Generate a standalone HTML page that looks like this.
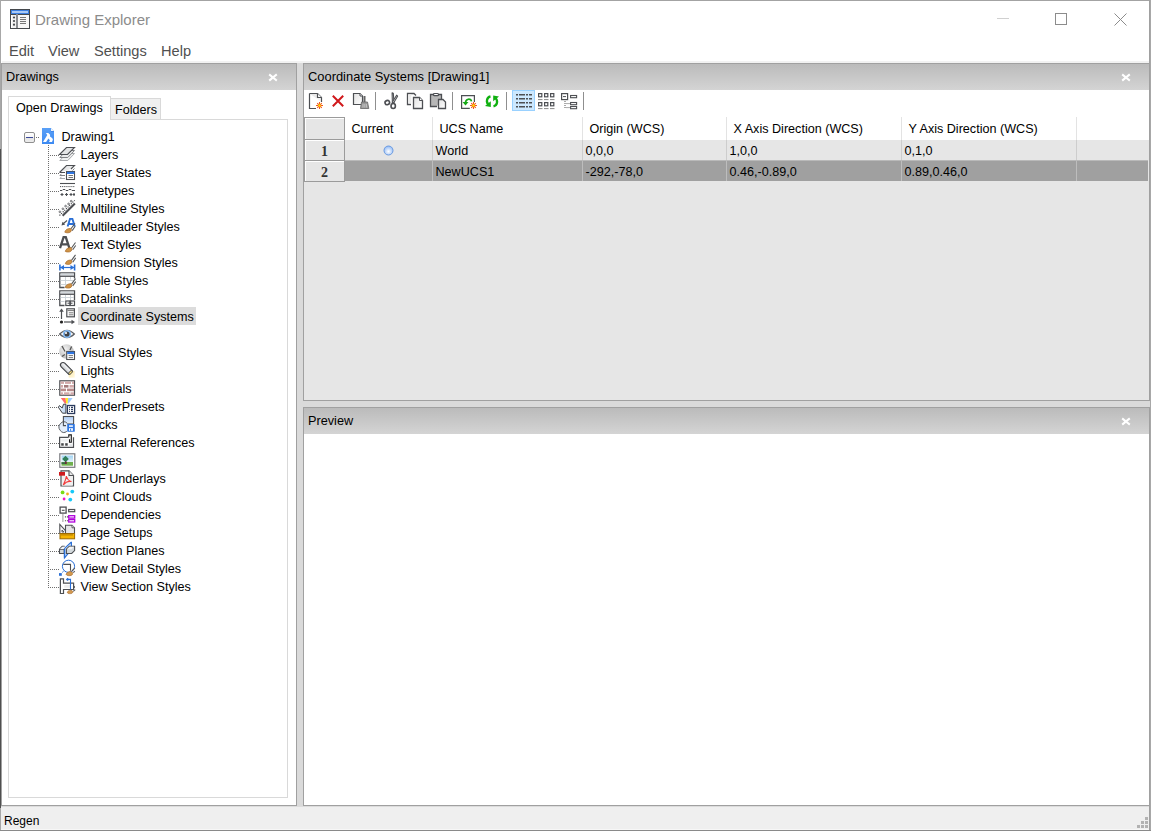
<!DOCTYPE html>
<html><head><meta charset="utf-8">
<style>
*{margin:0;padding:0;box-sizing:border-box}
html,body{width:1151px;height:831px;overflow:hidden;background:#fff;font-family:"Liberation Sans",sans-serif;color:#000}
.a{position:absolute}
.t{position:absolute;white-space:nowrap;line-height:1}
svg{position:absolute;overflow:visible}
.hdr{position:absolute;background:linear-gradient(#bbbbbb,#d4d4d4)}
</style></head><body>
<!-- window frame -->
<div class="a" style="left:0;top:0;width:1151px;height:1px;background:#a3a3a3"></div>
<div class="a" style="left:0;top:0;width:1px;height:831px;background:#a8a8a8"></div><div class="a" style="left:0;top:149px;width:1px;height:659px;background:#4f4f4f"></div>
<div class="a" style="left:1149px;top:0;width:1px;height:831px;background:#a0a0a0"></div>
<div class="a" style="left:1150px;top:0;width:1px;height:831px;background:#a8a8a8"></div>
<div class="a" style="left:0;top:830px;width:1151px;height:1px;background:#8a8a8a"></div>

<svg style="left:10px;top:9px" width="20" height="20" viewBox="0 0 20 20">
<rect x="0.5" y="0.5" width="19" height="19" fill="#fff" stroke="#45484c"/>
<rect x="1" y="1" width="18" height="4" fill="#3a7ee0"/><rect x="2" y="2" width="16" height="2" fill="#a9c9f5"/>
<path d="M1,5.5H19" stroke="#45484c"/><rect x="6" y="5" width="2" height="14" fill="#8a8c90"/>
<rect x="2" y="6" width="4" height="13" fill="#f1f1f1"/><rect x="8" y="6" width="11" height="13" fill="#f7f7f7"/>
<circle cx="4" cy="8.5" r="1.1" fill="#45484c"/><circle cx="4" cy="12" r="1.1" fill="#45484c"/><circle cx="4" cy="15.7" r="1.1" fill="#45484c"/>
<path d="M10,8.5h6M10,10.5h6M10,12.5h6M10,14.5h6" stroke="#777" stroke-width="1"/>
</svg>
<div class="t" style="left:35px;top:11.5px;font-size:15px;color:#8c8c8c">Drawing Explorer</div>
<div class="a" style="left:997px;top:18px;width:12px;height:1px;background:#d0d0d0"></div>
<div class="a" style="left:1055px;top:13px;width:12px;height:12px;border:1px solid #8c8c8c"></div>
<svg style="left:1114px;top:13px" width="13" height="13" viewBox="0 0 13 13"><path d="M0.5,0.5 L12.5,12.5 M12.5,0.5 L0.5,12.5" stroke="#8c8c8c" stroke-width="1"/></svg>

<div class="t" style="left:9px;top:44px;font-size:14.6px;color:#505050">Edit</div>
<div class="t" style="left:48px;top:44px;font-size:14.6px;color:#505050">View</div>
<div class="t" style="left:94px;top:44px;font-size:14.6px;color:#505050">Settings</div>
<div class="t" style="left:161px;top:44px;font-size:14.6px;color:#505050">Help</div>

<div class="a" style="left:2px;top:61px;width:1147px;height:2px;background:#f2f2f2"></div>

<!-- left dock -->
<div class="a" style="left:1px;top:63px;width:296px;height:743px;background:#fff;border:1px solid #a0a0a0"></div>
<div class="hdr" style="left:2px;top:64px;width:294px;height:26px"></div>
<div class="t" style="left:6px;top:71px;font-size:12.7px">Drawings</div>
<svg style="left:269px;top:74px" width="8" height="7" viewBox="0 0 8 7"><path d="M1,1 L7,6 M7,1 L1,6" stroke="#fff" stroke-width="2.1" stroke-linecap="square"/></svg>

<!-- tabs -->
<div class="a" style="left:8px;top:119px;width:280px;height:679px;border:1px solid #d9d9d9"></div>
<div class="a" style="left:110px;top:98px;width:51px;height:22px;background:#f0f0f0;border:1px solid #d9d9d9"></div>
<div class="a" style="left:8px;top:96px;width:103px;height:24px;background:#fff;border:1px solid #d9d9d9;border-bottom:none"></div>
<div class="t" style="left:16px;top:102px;font-size:12.6px">Open Drawings</div>
<div class="t" style="left:115px;top:104px;font-size:12.6px">Folders</div>
<div class="a" style="left:24px;top:132px;width:11px;height:11px;border:1px solid #8f8f8f;border-radius:2px;background:linear-gradient(#fff 0,#f7f7f7 45%,#e4e4e4 55%,#ececec)"></div>
<div class="a" style="left:26px;top:137px;width:7px;height:1px;background:#3b4a9a"></div>
<div class="a" style="left:36px;top:137px;width:4px;height:1px;background:repeating-linear-gradient(to right,#6e6e6e 0 1px,transparent 1px 2px)"></div>
<svg style="left:42px;top:128px" width="12" height="16" viewBox="0 0 12 16">
<defs><linearGradient id="dg" x1="0" y1="0" x2="0" y2="1"><stop offset="0" stop-color="#5aa0f7"/><stop offset="1" stop-color="#3d8af2"/></linearGradient></defs>
<path d="M0,0 H9 L12,3 V16 H0Z" fill="url(#dg)"/><path d="M9,0 L12,3 H9Z" fill="#eef3fa"/><rect x="9" y="3" width="3" height="0.8" fill="#3b82e8"/>
<path d="M3.9,5.1 H6.3 L8.1,6.7 L8,8.5 C9.5,9.3 10.9,10.5 10.9,11.8 L10,13.9 H7 L7.9,12.2 L6.4,10.6 L4.1,13.9 H1 L5.3,7.1Z" fill="#fff"/></svg>
<div class="t" style="left:61.5px;top:130.5px;font-size:12.6px">Drawing1</div>
<div class="a" style="left:48px;top:145px;width:1px;height:443px;background:repeating-linear-gradient(to bottom,#6e6e6e 0 1px,transparent 1px 2px)"></div>
<div class="a" style="left:50px;top:155px;width:9px;height:1px;background:repeating-linear-gradient(to right,#6e6e6e 0 1px,transparent 1px 2px)"></div>
<svg style="left:59px;top:146px" width="17" height="17" viewBox="0 0 17 17"><path d="M0.8,14.5 L7.5,7.5 H15.5 L8.8,14.5Z" fill="#f0f1f1" stroke="#a8aaad"/>
<path d="M0.8,11.5 L7.5,4.5 H15.5 L8.8,11.5Z" fill="#eaebec" stroke="#808285"/>
<path d="M0.5,8.5 L7.5,1.5 H15.5 L8.5,8.5Z" fill="#e4e5e6" stroke="#4d4f53" stroke-width="1.1"/></svg>
<div class="t" style="left:80.5px;top:148.5px;font-size:12.6px">Layers</div>
<div class="a" style="left:50px;top:173px;width:9px;height:1px;background:repeating-linear-gradient(to right,#6e6e6e 0 1px,transparent 1px 2px)"></div>
<svg style="left:59px;top:164px" width="17" height="17" viewBox="0 0 17 17"><path d="M0.8,14.5 L2.5,12.8 M1,14.5 H6" fill="none" stroke="#a8aaad"/>
<path d="M0.8,11.5 L2.5,9.8 M1,11.5 H6" fill="none" stroke="#808285"/>
<path d="M0.5,8.5 L7.5,1.5 H15.5 L12,5 M0.5,8.5 H6" fill="#e8e9ea" stroke="#4d4f53" stroke-width="1.1"/>
<path d="M15.5,4.5 L13.5,6.5" stroke="#808285"/>
<rect x="7.5" y="7.5" width="8" height="8" fill="#fff" stroke="#4d4f53" stroke-width="1.1"/>
<rect x="8" y="7.8" width="7.3" height="2.2" fill="#2f76e0"/>
<path d="M9.5,11.5h4.5M9.5,13.5h4.5" stroke="#777"/></svg>
<div class="t" style="left:80.5px;top:166.5px;font-size:12.6px">Layer States</div>
<div class="a" style="left:50px;top:191px;width:9px;height:1px;background:repeating-linear-gradient(to right,#6e6e6e 0 1px,transparent 1px 2px)"></div>
<svg style="left:59px;top:182px" width="17" height="17" viewBox="0 0 17 17"><path d="M1,1.5H16" stroke="#4d4f53" stroke-width="1.1"/>
<path d="M1,4.6H16" stroke="#4d4f53" stroke-dasharray="1.2,0.9"/>
<path d="M1,8.5 H3 L4,7.5 H6 L7,8.5 H9 L10,7.5 H12 L13,8.5 H16" stroke="#4d4f53" fill="none" stroke-width="1"/>
<path d="M1.5,12.5h3M3,11v3M6,12.5h3M7.5,11v3M10.5,12.5h3M12,11v3M14,12.5h2M15,11v3" stroke="#4d4f53" stroke-width="1.1"/></svg>
<div class="t" style="left:80.5px;top:184.5px;font-size:12.6px">Linetypes</div>
<div class="a" style="left:50px;top:209px;width:9px;height:1px;background:repeating-linear-gradient(to right,#6e6e6e 0 1px,transparent 1px 2px)"></div>
<svg style="left:59px;top:200px" width="17" height="17" viewBox="0 0 17 17"><path d="M0.5,15.5 L15.7,0.3" stroke="#3f4145" stroke-dasharray="1.2,1.1" stroke-width="1.1"/>
<path d="M3.6,15.8 L15.9,3.5" stroke="#4d4f53" stroke-width="2.1"/>
<g fill="#c8c9cb" stroke="#5a5c60" stroke-width="0.7"><circle cx="0.9" cy="11.8" r="0.9"/><circle cx="3.9" cy="8.8" r="0.9"/><circle cx="6.6" cy="6.1" r="0.9"/><circle cx="9.6" cy="3.9" r="0.9"/><circle cx="12.2" cy="1.2" r="0.9"/></g></svg>
<div class="t" style="left:80.5px;top:202.5px;font-size:12.6px">Multiline Styles</div>
<div class="a" style="left:50px;top:227px;width:9px;height:1px;background:repeating-linear-gradient(to right,#6e6e6e 0 1px,transparent 1px 2px)"></div>
<svg style="left:59px;top:218px" width="17" height="17" viewBox="0 0 17 17"><path d="M8.6,8.5 L11,0.9 H13.4 L15.8,8.5 M10,6 H14.5" stroke="#2a6fd6" stroke-width="1.9" fill="none"/>
<path d="M8,2.5 L4.5,5.5" stroke="#4d4f53" stroke-width="1.1"/><path d="M2.5,7.5 L3.5,3.8 L6.2,6.5Z" fill="#4d4f53"/>
<g transform="translate(0,0)"><path d="M16,5.3 L12,10.8 M16.2,8.3 L13.2,12.6" stroke="#55575a" stroke-width="1.1" fill="none"/>
<path d="M5.8,14.2 C6.2,11.8 8.5,10.3 11.6,10.4 C13,11.3 12.6,14 10.2,14.6 C8.6,15 7,14.8 5.8,14.2Z" fill="#cf9447" stroke="#a8682a" stroke-width="0.7"/></g></svg>
<div class="t" style="left:80.5px;top:220.5px;font-size:12.6px">Multileader Styles</div>
<div class="a" style="left:50px;top:245px;width:9px;height:1px;background:repeating-linear-gradient(to right,#6e6e6e 0 1px,transparent 1px 2px)"></div>
<svg style="left:59px;top:236px" width="17" height="17" viewBox="0 0 17 17"><path d="M1,12.2 L4.6,1.1 H6.8 L10.4,12.2 M3,8.3 H8.4" stroke="#4d4f53" stroke-width="2.3" fill="none"/>
<g transform="translate(0.5,1.2)"><path d="M16,5.3 L12,10.8 M16.2,8.3 L13.2,12.6" stroke="#55575a" stroke-width="1.1" fill="none"/>
<path d="M5.8,14.2 C6.2,11.8 8.5,10.3 11.6,10.4 C13,11.3 12.6,14 10.2,14.6 C8.6,15 7,14.8 5.8,14.2Z" fill="#cf9447" stroke="#a8682a" stroke-width="0.7"/></g></svg>
<div class="t" style="left:80.5px;top:238.5px;font-size:12.6px">Text Styles</div>
<div class="a" style="left:50px;top:263px;width:9px;height:1px;background:repeating-linear-gradient(to right,#6e6e6e 0 1px,transparent 1px 2px)"></div>
<svg style="left:59px;top:254px" width="17" height="17" viewBox="0 0 17 17"><g transform="translate(0.5,-4.4)"><path d="M16,5.3 L12,10.8 M16.2,8.3 L13.2,12.6" stroke="#55575a" stroke-width="1.1" fill="none"/>
<path d="M5.8,14.2 C6.2,11.8 8.5,10.3 11.6,10.4 C13,11.3 12.6,14 10.2,14.6 C8.6,15 7,14.8 5.8,14.2Z" fill="#cf9447" stroke="#a8682a" stroke-width="0.7"/></g><path d="M1,13.5H15" stroke="#2a6fd6" stroke-width="1.2"/>
<path d="M0.9,10.5v6M15.6,10.5v6" stroke="#2a6fd6" stroke-width="1.6"/>
<path d="M1.2,13.5 L5,11 V16Z M15.3,13.5 L11.5,11 V16Z" fill="#2a6fd6"/></svg>
<div class="t" style="left:80.5px;top:256.5px;font-size:12.6px">Dimension Styles</div>
<div class="a" style="left:50px;top:281px;width:9px;height:1px;background:repeating-linear-gradient(to right,#6e6e6e 0 1px,transparent 1px 2px)"></div>
<svg style="left:59px;top:272px" width="17" height="17" viewBox="0 0 17 17"><path d="M5.5,15.5 H0.8 V0.8 H15.5 V6.5" fill="#fff" stroke="#4d4f53" stroke-width="1.3"/>
<rect x="1.5" y="1.5" width="13.4" height="2.4" fill="#d3d8dc"/><path d="M1,4.3H15.5" stroke="#4d4f53" stroke-width="1.2"/>
<path d="M6.5,5v10.5M11.5,5v2.5M1.5,8.5h13M1.5,12.5h7" stroke="#c9d0d6" stroke-width="0.9"/><g transform="translate(0.5,1.3)"><path d="M16,5.3 L12,10.8 M16.2,8.3 L13.2,12.6" stroke="#55575a" stroke-width="1.1" fill="none"/>
<path d="M5.8,14.2 C6.2,11.8 8.5,10.3 11.6,10.4 C13,11.3 12.6,14 10.2,14.6 C8.6,15 7,14.8 5.8,14.2Z" fill="#cf9447" stroke="#a8682a" stroke-width="0.7"/></g></svg>
<div class="t" style="left:80.5px;top:274.5px;font-size:12.6px">Table Styles</div>
<div class="a" style="left:50px;top:299px;width:9px;height:1px;background:repeating-linear-gradient(to right,#6e6e6e 0 1px,transparent 1px 2px)"></div>
<svg style="left:59px;top:290px" width="17" height="17" viewBox="0 0 17 17"><path d="M5.5,15.5 H0.8 V0.8 H15.5 V10" fill="#fff" stroke="#4d4f53" stroke-width="1.3"/>
<rect x="1.5" y="1.5" width="13.4" height="2.4" fill="#d3d8dc"/><path d="M1,4.3H15.5" stroke="#4d4f53" stroke-width="1.2"/>
<path d="M6.5,5v5M11.5,5v5M1.5,7.5h13.5M1.5,11.5h4" stroke="#c9d0d6" stroke-width="0.9"/>
<rect x="6.8" y="11" width="4.2" height="4.5" fill="#fff" stroke="#4d4f53" stroke-width="1.2"/><rect x="11.3" y="11" width="4.2" height="4.5" fill="#fff" stroke="#4d4f53" stroke-width="1.2"/>
<path d="M8.5,13.2h5" stroke="#4d4f53" stroke-width="1.1"/></svg>
<div class="t" style="left:80.5px;top:292.5px;font-size:12.6px">Datalinks</div>
<div class="a" style="left:50px;top:317px;width:9px;height:1px;background:repeating-linear-gradient(to right,#6e6e6e 0 1px,transparent 1px 2px)"></div>
<svg style="left:59px;top:308px" width="17" height="17" viewBox="0 0 17 17"><path d="M2.5,11V1.5" stroke="#4d4f53" stroke-width="1.2"/><path d="M0.2,3.8 L2.5,0.4 L4.8,3.8Z" fill="#4d4f53"/>
<circle cx="2.5" cy="14" r="1.6" fill="#222"/>
<path d="M5,14H14" stroke="#4d4f53" stroke-width="1.2"/><path d="M12.5,11.7 L16,14 L12.5,16.3Z" fill="#4d4f53"/>
<rect x="7.8" y="0.8" width="7.6" height="8" fill="#fff" stroke="#4d4f53" stroke-width="1.2"/>
<path d="M8.5,2.6h6.5M9.8,4.8h4.6M9.8,6.8h4.6" stroke="#666" stroke-width="0.9"/></svg>
<div class="a" style="left:78px;top:307px;width:118px;height:18px;background:#dcdcdc"></div>
<div class="t" style="left:80.5px;top:310.5px;font-size:12.6px">Coordinate Systems</div>
<div class="a" style="left:50px;top:335px;width:9px;height:1px;background:repeating-linear-gradient(to right,#6e6e6e 0 1px,transparent 1px 2px)"></div>
<svg style="left:59px;top:326px" width="17" height="17" viewBox="0 0 17 17"><path d="M0.6,8 Q8,0.8 15.4,8 Q8,15.2 0.6,8Z" fill="#f4f4f4" stroke="#5a5c60" stroke-width="1.1"/>
<circle cx="8" cy="8" r="3.3" fill="#404246" stroke="#86bdf7" stroke-width="1.5"/>
<circle cx="7" cy="7" r="1.1" fill="#fff"/></svg>
<div class="t" style="left:80.5px;top:328.5px;font-size:12.6px">Views</div>
<div class="a" style="left:50px;top:353px;width:9px;height:1px;background:repeating-linear-gradient(to right,#6e6e6e 0 1px,transparent 1px 2px)"></div>
<svg style="left:59px;top:344px" width="17" height="17" viewBox="0 0 17 17"><defs><radialGradient id="vs" cx="0.4" cy="0.35" r="0.7"><stop offset="0" stop-color="#f2f2f2"/><stop offset="1" stop-color="#b8b8b8"/></radialGradient></defs>
<circle cx="7.5" cy="7.5" r="7.3" fill="url(#vs)"/>
<path d="M3,2 L6,7.5 M12.6,2.5 L11,6 M3,12.5 L5.8,10.5" stroke="#555" stroke-width="1.3"/>
<rect x="7.7" y="7.5" width="7.8" height="8" fill="#fff" stroke="#4d4f53" stroke-width="1.1"/>
<rect x="8.2" y="7.8" width="7" height="2.3" fill="#2f76e0"/>
<path d="M9.6,11.6h4.4M9.6,13.6h4.4" stroke="#777"/></svg>
<div class="t" style="left:80.5px;top:346.5px;font-size:12.6px">Visual Styles</div>
<div class="a" style="left:50px;top:371px;width:9px;height:1px;background:repeating-linear-gradient(to right,#6e6e6e 0 1px,transparent 1px 2px)"></div>
<svg style="left:59px;top:362px" width="17" height="17" viewBox="0 0 17 17"><defs><linearGradient id="lg" x1="0" y1="0" x2="1" y2="1"><stop offset="0" stop-color="#fde9a8"/><stop offset="1" stop-color="#fff8e0"/></linearGradient>
<linearGradient id="lc" x1="0" y1="1" x2="1" y2="0"><stop offset="0" stop-color="#7d8084"/><stop offset="0.55" stop-color="#eef0f2"/><stop offset="1" stop-color="#9a9da1"/></linearGradient></defs>
<rect x="9.7" y="9" width="6" height="6.6" fill="url(#lg)"/>
<path d="M2.23,4.77 A2.5,2.5 0 0 1 5.77,1.23 L13.27,8.73 L9.73,12.27Z" fill="url(#lc)" stroke="#3f4145" stroke-width="1.1"/>
<ellipse cx="11.5" cy="10.5" rx="2.4" ry="1.2" transform="rotate(-45 11.5 10.5)" fill="#ffe27a" stroke="#3f4145" stroke-width="0.9"/></svg>
<div class="t" style="left:80.5px;top:364.5px;font-size:12.6px">Lights</div>
<div class="a" style="left:50px;top:389px;width:9px;height:1px;background:repeating-linear-gradient(to right,#6e6e6e 0 1px,transparent 1px 2px)"></div>
<svg style="left:59px;top:380px" width="17" height="17" viewBox="0 0 17 17"><rect x="0.8" y="0.8" width="14.7" height="14.4" fill="#fff" stroke="#4d4f53" stroke-width="1.2"/>
<g fill="#d2aaaa"><rect x="1.5" y="1.5" width="3.5" height="2.4"/><rect x="6" y="1.5" width="6" height="2.4"/><rect x="13" y="1.5" width="2" height="2.4"/>
<rect x="1.5" y="5" width="2.5" height="2.6"/><rect x="5" y="5" width="4.5" height="2.6" fill="#a57a7a"/><rect x="10.5" y="5" width="4.5" height="2.6"/>
<rect x="1.5" y="8.6" width="5.5" height="2.6" fill="#b88a8a"/><rect x="8" y="8.6" width="7" height="2.6" fill="#b88a8a"/>
<rect x="1.5" y="12.3" width="2.5" height="2.5"/><rect x="5" y="12.3" width="5.5" height="2.5"/><rect x="11.5" y="12.3" width="3.5" height="2.5"/></g></svg>
<div class="t" style="left:80.5px;top:382.5px;font-size:12.6px">Materials</div>
<div class="a" style="left:50px;top:407px;width:9px;height:1px;background:repeating-linear-gradient(to right,#6e6e6e 0 1px,transparent 1px 2px)"></div>
<svg style="left:59px;top:398px" width="17" height="17" viewBox="0 0 17 17"><defs><linearGradient id="rpb" x1="0" y1="0" x2="1" y2="0"><stop offset="0" stop-color="#eef5fd"/><stop offset="1" stop-color="#bcd4f0"/></linearGradient></defs>
<path d="M1.8,0 L6.6,0 L7.2,5.6 L5.8,5.6Z" fill="#ff5050" opacity="0.85"/><path d="M6.6,0 L9.1,0 L8.7,5.6 L7.2,5.6Z" fill="#ffee1a"/><path d="M9.1,0 L13.6,0 L9.6,5.6 L8.7,5.6Z" fill="#94c2fb" opacity="0.9"/>
<path d="M4.5,6.2 H6.9 V15.2 H3.5 L-0.6,9.3 L0.4,7.6 L3.2,10 Z" fill="url(#rpb)" stroke="#3f4145" stroke-width="1" stroke-linejoin="round"/>
<rect x="8.4" y="7.5" width="7.2" height="8" fill="#fff" stroke="#2b3b5e" stroke-width="1.3"/>
<path d="M10,9.4h0.9M12,9.4h2M10,11.4h0.9M12,11.4h2M10,13.4h0.9M12,13.4h2" stroke="#2b3b5e" stroke-width="1.1"/></svg>
<div class="t" style="left:80.5px;top:400.5px;font-size:12.6px">RenderPresets</div>
<div class="a" style="left:50px;top:425px;width:9px;height:1px;background:repeating-linear-gradient(to right,#6e6e6e 0 1px,transparent 1px 2px)"></div>
<svg style="left:59px;top:416px" width="17" height="17" viewBox="0 0 17 17"><defs><linearGradient id="bk" x1="0" y1="0" x2="0" y2="1"><stop offset="0" stop-color="#acccf7"/><stop offset="1" stop-color="#e8f1fc"/></linearGradient></defs>
<rect x="4.4" y="0.5" width="10.2" height="7.5" fill="url(#bk)" stroke="#4d4f53" stroke-width="1.1"/>
<path d="M8.2,7.2 A4.9,5.2 0 1 0 7.8,15.4" fill="#e4eefb" stroke="#4d4f53" stroke-width="0.9"/>
<path d="M4.4,4.8 V9.6 H7" fill="none" stroke="#4d4f53" stroke-width="1.1"/>
<rect x="8.2" y="8.1" width="7.6" height="7.6" rx="0.4" fill="#2f76e0"/>
<rect x="10" y="9.3" width="3.9" height="1.5" fill="#fff"/><rect x="10" y="12.2" width="3.9" height="2.6" fill="#fff"/><rect x="11.1" y="12.8" width="1" height="2" fill="#2f76e0"/></svg>
<div class="t" style="left:80.5px;top:418.5px;font-size:12.6px">Blocks</div>
<div class="a" style="left:50px;top:443px;width:9px;height:1px;background:repeating-linear-gradient(to right,#6e6e6e 0 1px,transparent 1px 2px)"></div>
<svg style="left:59px;top:434px" width="17" height="17" viewBox="0 0 17 17"><path d="M9.3,3.4 H0.6 V13.4 H14.5 V3.2" fill="#fbfbfb" stroke="#4d4f53" stroke-width="1.2"/>
<rect x="2.2" y="5.2" width="6.5" height="2.4" fill="#eceeef"/><rect x="10.3" y="10.3" width="3.2" height="1.9" fill="#e3e6e8"/>
<path d="M9.8,3.6 V0.9 H12.3 V8.3 H10.5 V5.2" stroke="#151515" fill="none" stroke-width="1.1"/>
<rect x="2.2" y="9.2" width="2.5" height="2.5" fill="#454749"/><rect x="6.2" y="9.2" width="2.5" height="2.5" fill="#454749"/></svg>
<div class="t" style="left:80.5px;top:436.5px;font-size:12.6px">External References</div>
<div class="a" style="left:50px;top:461px;width:9px;height:1px;background:repeating-linear-gradient(to right,#6e6e6e 0 1px,transparent 1px 2px)"></div>
<svg style="left:59px;top:452px" width="17" height="17" viewBox="0 0 17 17"><rect x="0.8" y="1.8" width="15" height="13.5" fill="#fff" stroke="#7a7c80" stroke-width="1.2"/>
<defs><linearGradient id="sk" x1="0" y1="0" x2="0" y2="1"><stop offset="0" stop-color="#9fd3f3"/><stop offset="1" stop-color="#e6f3fb"/></linearGradient></defs>
<rect x="2.5" y="3.5" width="11.5" height="6.5" fill="url(#sk)"/><rect x="2.5" y="10" width="11.5" height="3.7" fill="#6fb04e"/>
<path d="M6.5,3.8 L9.8,7 L6.5,10.2 L3.2,7Z" fill="#2f7e58"/><rect x="6" y="9.5" width="1.8" height="2.5" fill="#6b2e3a"/><rect x="2.5" y="10.5" width="3.5" height="1.2" fill="#1f4a48"/></svg>
<div class="t" style="left:80.5px;top:454.5px;font-size:12.6px">Images</div>
<div class="a" style="left:50px;top:479px;width:9px;height:1px;background:repeating-linear-gradient(to right,#6e6e6e 0 1px,transparent 1px 2px)"></div>
<svg style="left:59px;top:470px" width="17" height="17" viewBox="0 0 17 17"><path d="M2,0.8 H10 L14.5,5.5 V16 H2Z" fill="#fff" stroke="#4d4f53" stroke-width="1.2"/>
<path d="M10,0.8 V5.5 H14.5" fill="#e8e8e8" stroke="#4d4f53" stroke-width="1.1"/>
<rect x="3" y="6" width="10.5" height="9.5" fill="#f0f0f0"/>
<rect x="0" y="2" width="6" height="3.7" fill="#cf1a1d"/>
<path d="M4.3,15 C5.5,12.5 7,9 7.5,6 C8,8.5 9.5,11 12.5,11.5 C10,11 7,11.5 4.3,15Z" fill="none" stroke="#f23c3c" stroke-width="1.2"/></svg>
<div class="t" style="left:80.5px;top:472.5px;font-size:12.6px">PDF Underlays</div>
<div class="a" style="left:50px;top:497px;width:9px;height:1px;background:repeating-linear-gradient(to right,#6e6e6e 0 1px,transparent 1px 2px)"></div>
<svg style="left:59px;top:488px" width="17" height="17" viewBox="0 0 17 17"><circle cx="3.6" cy="4.4" r="1.9" fill="#78dc18"/><circle cx="8.5" cy="6" r="1.4" fill="#f2b020"/>
<circle cx="13.3" cy="3.6" r="1.9" fill="#16c8f8"/><circle cx="5.1" cy="11" r="1.4" fill="#f018c8"/><circle cx="11.3" cy="11.6" r="1.9" fill="#16c8f8"/></svg>
<div class="t" style="left:80.5px;top:490.5px;font-size:12.6px">Point Clouds</div>
<div class="a" style="left:50px;top:515px;width:9px;height:1px;background:repeating-linear-gradient(to right,#6e6e6e 0 1px,transparent 1px 2px)"></div>
<svg style="left:59px;top:506px" width="17" height="17" viewBox="0 0 17 17"><rect x="1.1" y="1.1" width="6" height="6" fill="#fff" stroke="#4d4f53" stroke-width="1.3"/>
<path d="M2.8,4.3h2.8" stroke="#4d4f53" stroke-width="1.1"/><rect x="9.7" y="3.5" width="6" height="2.2" fill="#fff" stroke="#4d4f53" stroke-width="1.2"/>
<rect x="9.7" y="9.7" width="6" height="2.4" fill="#fff" stroke="#b000dc" stroke-width="1.3"/><rect x="9.7" y="13.6" width="6" height="2.4" fill="#fff" stroke="#b000dc" stroke-width="1.3"/>
<path d="M3.9,8.6v1M3.9,10.6v1M3.9,12.6v1M3.9,14.6v1M5.9,10.9h1M7.9,10.9h1M5.9,14.8h1M7.9,14.8h1" stroke="#444" stroke-width="1.1"/></svg>
<div class="t" style="left:80.5px;top:508.5px;font-size:12.6px">Dependencies</div>
<div class="a" style="left:50px;top:533px;width:9px;height:1px;background:repeating-linear-gradient(to right,#6e6e6e 0 1px,transparent 1px 2px)"></div>
<svg style="left:59px;top:524px" width="17" height="17" viewBox="0 0 17 17"><path d="M0.8,0.5 V9.5 H9Z" fill="#f4f4f4" stroke="#4d4f53" stroke-width="1.1"/><path d="M3,6 V8 H5Z" fill="none" stroke="#4d4f53" stroke-width="0.9"/>
<path d="M6.5,9 V1.3 H13 L15.5,3.8 V9" fill="#e6e6e6" stroke="#4d4f53" stroke-width="1.1"/><path d="M13,1.3 V3.8 H15.5" fill="#fff" stroke="#4d4f53" stroke-width="0.9"/>
<rect x="1" y="9.5" width="14.6" height="5.3" fill="#f5b400" stroke="#9c6a00" stroke-width="1"/>
<path d="M3,10v1.6M5,10v1.6M7,10v1.6M9,10v1.6M11,10v1.6M13,10v1.6" stroke="#8a5a00" stroke-width="0.8"/></svg>
<div class="t" style="left:80.5px;top:526.5px;font-size:12.6px">Page Setups</div>
<div class="a" style="left:50px;top:551px;width:9px;height:1px;background:repeating-linear-gradient(to right,#6e6e6e 0 1px,transparent 1px 2px)"></div>
<svg style="left:59px;top:542px" width="17" height="17" viewBox="0 0 17 17"><path d="M5.5,15.8 V6.4 L12,0.4 H12.4 V5 L8.8,12Z" fill="#d6e8fd" stroke="#2a6fd6" stroke-width="1.2"/>
<path d="M5.7,4.3 H3.2 L0.5,7.1 V11.5 H5.2 V7.1 H0.5" fill="#d3d9dc" stroke="#4d4f53" stroke-width="1.1"/>
<path d="M0.9,7 L3.4,4.8 H5.4 V7Z" fill="#f4f5f6"/>
<path d="M7.4,7.1 L10.3,4.3 H15.6 V8.6 L12.7,11.5 H7.4Z" fill="#d3d9dc" stroke="#4d4f53" stroke-width="1.1"/>
<path d="M7.9,7.3 L10.5,4.8 H15 L12.5,7.3Z" fill="#f4f5f6"/>
<path d="M5.5,15.8 V6.4" stroke="#2a6fd6" stroke-width="1.3"/></svg>
<div class="t" style="left:80.5px;top:544.5px;font-size:12.6px">Section Planes</div>
<div class="a" style="left:50px;top:569px;width:9px;height:1px;background:repeating-linear-gradient(to right,#6e6e6e 0 1px,transparent 1px 2px)"></div>
<svg style="left:59px;top:560px" width="17" height="17" viewBox="0 0 17 17"><circle cx="9.5" cy="6.3" r="6.1" fill="#fff" stroke="#2a6fd6" stroke-width="1"/>
<path d="M4.3,4.4 H11.5 V10.8" fill="none" stroke="#4d4f53" stroke-width="1.1"/>
<path d="M5.2,10.7 L2.6,12.9" stroke="#2a6fd6" stroke-width="1" stroke-dasharray="1,0.8"/><rect x="0" y="13.1" width="2.8" height="2.7" fill="#2a6fd6"/>
<path d="M15.8,8.1 L12.8,11 M15.8,11.2 L14.3,12.6" stroke="#55575a" stroke-width="1.1"/>
<path d="M7.1,14.4 C7.5,12.6 9.5,11.5 11.8,11.5 C13.3,11.8 14,13 13.4,14.5 C12.8,15.5 11.4,15.7 9.9,15.6 C8.8,15.6 7.6,15.3 7.1,14.4Z" fill="#d39a4e" stroke="#a8682a" stroke-width="0.7"/></svg>
<div class="t" style="left:80.5px;top:562.5px;font-size:12.6px">View Detail Styles</div>
<div class="a" style="left:50px;top:587px;width:9px;height:1px;background:repeating-linear-gradient(to right,#6e6e6e 0 1px,transparent 1px 2px)"></div>
<svg style="left:59px;top:578px" width="17" height="17" viewBox="0 0 17 17"><path d="M1.4,0.9 H4.5 V5.2 H14.6 V11.5 H4.5 V15.5 H1.4Z" fill="#fff" stroke="#4d4f53" stroke-width="1.2"/>
<rect x="5.2" y="7" width="6" height="2.8" fill="#eeeeee"/>
<path d="M14.8,8 L15.8,9 L14.8,10" fill="none" stroke="#4d4f53" stroke-width="1"/>
<path d="M11.5,11.5 V1.4 H8.6" stroke="#2a6fd6" fill="none" stroke-width="1.1"/><path d="M6.8,1.4 L8.6,-0.3 L10.2,1.4 L8.6,3.1Z" fill="#2a6fd6"/>
<path d="M16.2,11.6 L14.2,13.4" stroke="#55575a" stroke-width="1.1"/>
<path d="M8.3,14.6 C8.5,13 10,12.3 12,12.4 C13.5,12.5 14,13.5 13.6,14.6 C13.2,15.5 12,15.7 10.5,15.6 C9.5,15.6 8.6,15.3 8.3,14.6Z" fill="#d39a4e" stroke="#a8682a" stroke-width="0.7"/></svg>
<div class="t" style="left:80.5px;top:580.5px;font-size:12.6px">View Section Styles</div>

<!-- splitters -->
<div class="a" style="left:297px;top:63px;width:6px;height:743px;background:#dadada"></div>

<!-- right top dock -->
<div class="a" style="left:303px;top:63px;width:847px;height:338px;background:#e6e6e6;border:1px solid #a0a0a0"></div>
<div class="hdr" style="left:304px;top:64px;width:845px;height:26px"></div>
<div class="a" style="left:304px;top:90px;width:845px;height:27px;background:#fff"></div>
<div class="t" style="left:308px;top:71px;font-size:12.9px">Coordinate Systems [Drawing1]</div>
<svg style="left:1122px;top:74px" width="8" height="7" viewBox="0 0 8 7"><path d="M1,1 L7,6 M7,1 L1,6" stroke="#fff" stroke-width="2.1" stroke-linecap="square"/></svg>

<svg style="left:308px;top:92px" width="18" height="18" viewBox="0 0 18 18">
<defs><linearGradient id="pg" x1="0" y1="0" x2="1" y2="1"><stop offset="0" stop-color="#e2e2e2"/><stop offset="1" stop-color="#fff"/></linearGradient></defs>
<path d="M1.5,1.5 H9.5 L13.5,5.5 V10 M7,16.5 H1.5Z" fill="url(#pg)" stroke="#4d4f53" stroke-width="1.2"/><path d="M1.5,1.5 V16.5 H8" fill="none" stroke="#4d4f53" stroke-width="1.2"/>
<path d="M9.5,1.5 V5.5 H13.5" fill="#fff" stroke="#4d4f53" stroke-width="1.2"/>
<path d="M11.5,10 V17 M8,13.5 H15 M9.2,11.2 L13.8,15.8 M13.8,11.2 L9.2,15.8" stroke="#f25a1c" stroke-width="1.1"/><circle cx="11.5" cy="13.5" r="1.3" fill="#ffe000"/>
</svg>
<svg style="left:331px;top:94px" width="14" height="14" viewBox="0 0 14 14"><path d="M1.8,1.8 L12.2,12.2 M12.2,1.8 L1.8,12.2" stroke="#d0181b" stroke-width="2"/></svg>
<svg style="left:352px;top:92px" width="18" height="18" viewBox="0 0 18 18">
<path d="M1.5,1.5 H8 L10.5,4 V12.5 H1.5Z" fill="url(#pg)" stroke="#4d4f53" stroke-width="1.2"/><path d="M8,1.5 V4 H10.5" fill="#fff" stroke="#4d4f53" stroke-width="1"/>
<rect x="11.5" y="4" width="2" height="6" fill="#666"/><path d="M9.5,10 H15.5 L16.8,16.5 H8.5Z" fill="#9b9b9b" stroke="#666" stroke-width="0.8"/>
<path d="M11,12v3.5M12.8,12v3.5M14.5,12v3.5" stroke="#cfcfcf" stroke-width="0.7"/>
</svg>
<div class="a" style="left:375px;top:92px;width:1px;height:18px;background:#8f8f8f"></div>
<svg style="left:384px;top:92px" width="14" height="18" viewBox="0 0 14 18">
<path d="M8.1,0.9 L9.3,1.2 L10,10.6 L8.4,10.6Z" fill="#fff" stroke="#4d4f53" stroke-width="1.1" stroke-linejoin="round"/>
<path d="M12.6,3.2 L13.6,4.2 L9.6,11 L8.3,10.2Z" fill="#fff" stroke="#4d4f53" stroke-width="1.1" stroke-linejoin="round"/>
<ellipse cx="3.3" cy="10.6" rx="2.3" ry="2.1" transform="rotate(-20 3.3 10.6)" fill="none" stroke="#4d4f53" stroke-width="1.6"/><ellipse cx="9.2" cy="14" rx="2.2" ry="2.5" fill="none" stroke="#4d4f53" stroke-width="1.6"/>
</svg>
<svg style="left:406px;top:92px" width="18" height="18" viewBox="0 0 18 18">
<path d="M5,12.5 H1.5 V1.5 H8 L10,3.5" fill="none" stroke="#4d4f53" stroke-width="1.3"/><rect x="2.3" y="2.3" width="3" height="9" fill="#ececec"/>
<path d="M7.5,5.5 H13.5 L16.5,8.5 V16.5 H7.5Z" fill="url(#pg)" stroke="#4d4f53" stroke-width="1.3"/><path d="M13.5,5.5 V8.5 H16.5" fill="#fff" stroke="#4d4f53" stroke-width="1"/>
</svg>
<svg style="left:429px;top:92px" width="18" height="18" viewBox="0 0 18 18">
<path d="M8,14.5 H1.5 V2.5 H12.5 V7" fill="#b7b7b7" stroke="#4d4f53" stroke-width="1.3"/><rect x="4.5" y="1.5" width="5" height="2.2" rx="1" fill="#fff" stroke="#4d4f53" stroke-width="1.2"/>
<path d="M9.5,7.5 H14 L16.5,10 V16.5 H9.5Z" fill="url(#pg)" stroke="#4d4f53" stroke-width="1.3"/>
</svg>
<div class="a" style="left:452px;top:92px;width:1px;height:18px;background:#8f8f8f"></div>
<svg style="left:460px;top:94px" width="18" height="16" viewBox="0 0 18 16">
<path d="M9.8,14.3 H1.6 V1.6 H14.4 V8" fill="none" stroke="#4d4f53" stroke-width="1.2"/>
<path d="M5.5,9 C5.5,4.5 11,4 11.5,7.3" fill="none" stroke="#17a917" stroke-width="1.7"/><path d="M2.5,8 L8.5,8 L5.5,11.5Z" fill="#17a917"/>
<path d="M13.5,8 V15 M10,11.5 H17 M11.2,9.2 L15.8,13.8 M15.8,9.2 L11.2,13.8" stroke="#f25a1c" stroke-width="1.1"/><circle cx="13.5" cy="11.5" r="1.3" fill="#ffe000"/>
</svg>
<svg style="left:485px;top:95px" width="14" height="13" viewBox="0 0 14 13">
<path d="M5.5,1.3 C1.8,2.2 0.4,7 4,10.2" fill="none" stroke="#10b010" stroke-width="2.3"/><path d="M0,11 L5.8,6.3 L5.8,12Z" fill="#10b010"/>
<path d="M8.5,11.4 C12.2,10.5 13.6,5.7 10,2.5" fill="none" stroke="#10b010" stroke-width="2.3"/><path d="M14,1.5 L8.2,6.3 L8.2,0.4Z" fill="#10b010"/>
</svg>
<div class="a" style="left:506px;top:92px;width:1px;height:18px;background:#8f8f8f"></div>
<div class="a" style="left:512px;top:90px;width:23px;height:21px;background:#cce8ff;border:1px solid #99d1ff"></div>
<svg style="left:515px;top:93px" width="17" height="15" viewBox="0 0 17 15">
<path d="M1,1.7h2M4,1.7h6M11,1.7h2M14,1.7h3M1,5.7h2M4,5.7h6M11,5.7h2M14,5.7h3M1,9.7h2M4,9.7h6M11,9.7h2M14,9.7h3M1,13.7h2M4,13.7h6M11,13.7h2M14,13.7h3" stroke="#4d4f53" stroke-width="1.4"/>
</svg>
<svg style="left:537px;top:92px" width="18" height="18" viewBox="0 0 18 18">
<rect x="1.6" y="1.6" width="3.2" height="3.2" fill="none" stroke="#4d4f53" stroke-width="1.2"/><rect x="7.6" y="1.6" width="3.2" height="3.2" fill="none" stroke="#4d4f53" stroke-width="1.2"/><rect x="13.6" y="1.6" width="3.2" height="3.2" fill="none" stroke="#4d4f53" stroke-width="1.2"/>
<path d="M1,7.6h4.5M7,7.6h4.5M13,7.6h4.5" stroke="#888" stroke-width="1"/>
<rect x="1.6" y="10.6" width="3.2" height="3.2" fill="none" stroke="#4d4f53" stroke-width="1.2"/><rect x="7.6" y="10.6" width="3.2" height="3.2" fill="none" stroke="#4d4f53" stroke-width="1.2"/><rect x="13.6" y="10.6" width="3.2" height="3.2" fill="none" stroke="#4d4f53" stroke-width="1.2"/>
<path d="M1,16.6h4.5M7,16.6h4.5M13,16.6h4.5" stroke="#888" stroke-width="1"/>
</svg>
<svg style="left:560px;top:92px" width="18" height="18" viewBox="0 0 18 18">
<rect x="1.6" y="1.6" width="6" height="6" fill="none" stroke="#4d4f53" stroke-width="1.2"/><path d="M3,4.6h3" stroke="#4d4f53"/>
<rect x="10.6" y="3.5" width="6" height="2.2" fill="none" stroke="#4d4f53" stroke-width="1.1"/>
<rect x="10.6" y="10.5" width="6" height="2.2" fill="none" stroke="#4d4f53" stroke-width="1.1"/><rect x="10.6" y="14.5" width="6" height="2.2" fill="none" stroke="#4d4f53" stroke-width="1.1"/>
<path d="M5,9v1M5,11v1M5,13v1M5,15v1M6.5,11.6h1M8.5,11.6h1M6.5,15.6h1M8.5,15.6h1" stroke="#555"/>
</svg>
<div class="a" style="left:583px;top:92px;width:1px;height:18px;background:#8f8f8f"></div>

<div class="a" style="left:304px;top:117px;width:845px;height:23px;background:#fff"></div>
<div class="a" style="left:345px;top:140px;width:803px;height:20px;background:#e6e6e6"></div>
<div class="a" style="left:345px;top:160px;width:803px;height:1px;background:#b9b9b9"></div>
<div class="a" style="left:345px;top:161px;width:803px;height:20px;background:#a0a0a0"></div>
<div class="a" style="left:304px;top:117px;width:41px;height:23px;background:#e6e6e6;border:1px solid #9b9b9b;box-shadow:inset 1px 1px 0 #fff"></div>
<div class="a" style="left:304px;top:139px;width:41px;height:22px;background:#e6e6e6;border:1px solid #9b9b9b;box-shadow:inset 1px 1px 0 #fff"></div>
<div class="t" style="left:304px;width:41px;text-align:center;top:144.5px;font-size:14px;font-weight:bold;font-family:'Liberation Serif',serif;color:#333">1</div>
<div class="a" style="left:304px;top:160px;width:41px;height:22px;background:#e6e6e6;border:1px solid #9b9b9b;box-shadow:inset 1px 1px 0 #fff"></div>
<div class="t" style="left:304px;width:41px;text-align:center;top:165.5px;font-size:14px;font-weight:bold;font-family:'Liberation Serif',serif;color:#333">2</div>
<div class="a" style="left:432px;top:117px;width:1px;height:23px;background:#e3e3e3"></div>
<div class="a" style="left:432px;top:140px;width:1px;height:20px;background:#cdcdcd"></div>
<div class="a" style="left:432px;top:161px;width:1px;height:20px;background:#bdbdbd"></div>
<div class="a" style="left:582px;top:117px;width:1px;height:23px;background:#e3e3e3"></div>
<div class="a" style="left:582px;top:140px;width:1px;height:20px;background:#cdcdcd"></div>
<div class="a" style="left:582px;top:161px;width:1px;height:20px;background:#bdbdbd"></div>
<div class="a" style="left:726px;top:117px;width:1px;height:23px;background:#e3e3e3"></div>
<div class="a" style="left:726px;top:140px;width:1px;height:20px;background:#cdcdcd"></div>
<div class="a" style="left:726px;top:161px;width:1px;height:20px;background:#bdbdbd"></div>
<div class="a" style="left:901px;top:117px;width:1px;height:23px;background:#e3e3e3"></div>
<div class="a" style="left:901px;top:140px;width:1px;height:20px;background:#cdcdcd"></div>
<div class="a" style="left:901px;top:161px;width:1px;height:20px;background:#bdbdbd"></div>
<div class="a" style="left:1076px;top:117px;width:1px;height:23px;background:#e3e3e3"></div>
<div class="a" style="left:1076px;top:140px;width:1px;height:20px;background:#cdcdcd"></div>
<div class="a" style="left:1076px;top:161px;width:1px;height:20px;background:#bdbdbd"></div>
<div class="t" style="left:351.5px;top:123px;font-size:12.6px">Current</div>
<div class="t" style="left:439.5px;top:123px;font-size:12.6px">UCS Name</div>
<div class="t" style="left:589.5px;top:123px;font-size:12.6px">Origin (WCS)</div>
<div class="t" style="left:733.5px;top:123px;font-size:12.6px">X Axis Direction (WCS)</div>
<div class="t" style="left:908.5px;top:123px;font-size:12.6px">Y Axis Direction (WCS)</div>
<svg style="left:383px;top:145px" width="11" height="11" viewBox="0 0 11 11"><defs><radialGradient id="rg" cx="0.5" cy="0.6" r="0.6"><stop offset="0" stop-color="#fff"/><stop offset="1" stop-color="#8fb8f5"/></radialGradient></defs><circle cx="5.5" cy="5.5" r="4.5" fill="url(#rg)" stroke="#6a9ae0" stroke-width="1"/></svg>
<div class="t" style="left:435.5px;top:145px;font-size:12.6px">World</div>
<div class="t" style="left:585.5px;top:145px;font-size:12.6px">0,0,0</div>
<div class="t" style="left:729.5px;top:145px;font-size:12.6px">1,0,0</div>
<div class="t" style="left:904.5px;top:145px;font-size:12.6px">0,1,0</div>
<div class="t" style="left:435.5px;top:166px;font-size:12.6px">NewUCS1</div>
<div class="t" style="left:585.5px;top:166px;font-size:12.6px">-292,-78,0</div>
<div class="t" style="left:729.5px;top:166px;font-size:12.6px">0.46,-0.89,0</div>
<div class="t" style="left:904.5px;top:166px;font-size:12.6px">0.89,0.46,0</div>

<div class="a" style="left:303px;top:401px;width:847px;height:6px;background:#dadada"></div>

<!-- preview dock -->
<div class="a" style="left:303px;top:407px;width:847px;height:399px;background:#fff;border:1px solid #a0a0a0"></div>
<div class="hdr" style="left:304px;top:408px;width:845px;height:26px"></div>
<div class="t" style="left:308px;top:415px;font-size:12.7px">Preview</div>
<svg style="left:1122px;top:418px" width="8" height="7" viewBox="0 0 8 7"><path d="M1,1 L7,6 M7,1 L1,6" stroke="#fff" stroke-width="2.1" stroke-linecap="square"/></svg>

<!-- status bar -->
<div class="a" style="left:1px;top:806px;width:1148px;height:24px;background:#efefef"></div><div class="a" style="left:1px;top:806px;width:1148px;height:1px;background:#dcdcdc"></div><div class="a" style="left:1px;top:829px;width:1148px;height:1px;background:#f7f7f7"></div>
<div class="t" style="left:4px;top:814.5px;font-size:12px">Regen</div>
<svg style="left:1137px;top:817px" width="11" height="11" viewBox="0 0 11 11"><path d="M8,0h3v3h-3zM4,4h3v3h-3zM8,4h3v3h-3zM0,8h3v3h-3zM4,8h3v3h-3zM8,8h3v3h-3z" fill="#b2b2b2"/></svg>
</body></html>
